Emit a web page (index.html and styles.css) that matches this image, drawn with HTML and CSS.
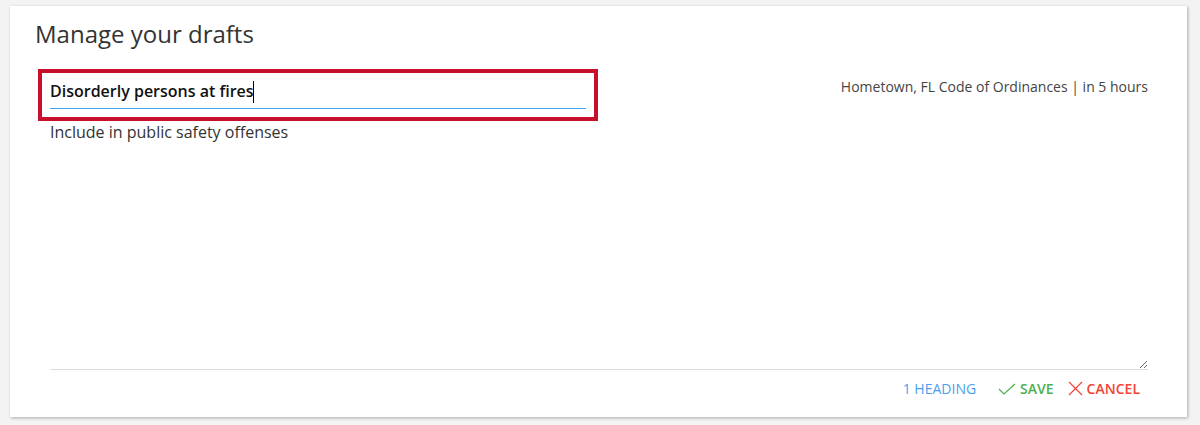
FILE: index.html
```html
<!DOCTYPE html>
<html lang="en">
<head>
  <meta charset="UTF-8">
  <title>Manage your drafts</title>
  <link rel="stylesheet" href="styles.css">
</head>
<body>
  <div class="card">
    <h1>Manage your drafts</h1>
    <div class="draft">
      <div class="draft-top">
        <div class="title-box">
          <input type="text" class="title-input" value="Disorderly persons at fires">
          <span class="caret"></span>
        </div>
        <div class="meta">Hometown, FL Code of Ordinances | in 5 hours</div>
      </div>
      <textarea class="desc">Include in public safety offenses</textarea>
      <div class="actions">
        <button class="btn heading">1 Heading</button>
        <button class="btn save">
          <svg width="18" height="12" viewBox="0 0 18 12"><path d="M1 6 L6 11 L17 1" fill="none" stroke="#4caf50" stroke-width="1.2"/></svg>
          Save
        </button>
        <button class="btn cancel">
          <svg width="15" height="15" viewBox="0 0 15 15"><path d="M1 1 L14 14 M14 1 L1 14" fill="none" stroke="#f44336" stroke-width="1.2"/></svg>
          Cancel
        </button>
      </div>
    </div>
  </div>
</body>
</html>
```

FILE: styles.css
```css
* {
  margin: 0;
  padding: 0;
  box-sizing: border-box;
  font-family: "Open Sans", Arial, sans-serif;
}

body {
  background: #f3f3f3;
  padding: 6px 13px 8px 10px;
}

.card {
  background: #fff;
  height: 411px;
  box-shadow: 1px 1px 3px rgba(0, 0, 0, 0.3);
  padding: 12px 39px 0 25px;
}

h1 {
  font-size: 24px;
  font-weight: 400;
  line-height: 32px;
  color: #333;
}

.draft {
  margin: 19px 0 0 15px;
}

.draft-top {
  display: flex;
  justify-content: space-between;
  align-items: flex-start;
}

.title-box {
  position: relative;
  width: 560px;
  margin-left: -12px;
  border: 4px solid #c8102e;
  padding: 0 8px 8px;
}

.title-input {
  display: block;
  width: 100%;
  height: 36px;
  border: none;
  border-bottom: 1px solid #42a5f5;
  outline: none;
  font-size: 16px;
  font-weight: 600;
  color: #111;
  background: transparent;
}

.caret {
  position: absolute;
  left: 211px;
  top: 8px;
  width: 1px;
  height: 22px;
  background: #000;
}

.meta {
  font-size: 14px;
  line-height: 20px;
  color: #444;
  margin-top: 8px;
}

.desc {
  display: block;
  width: 100%;
  height: 249px;
  border: none;
  border-bottom: 1px solid #ddd;
  outline: none;
  resize: vertical;
  font-size: 16px;
  line-height: 22px;
  color: #333;
}

.actions {
  display: flex;
  justify-content: flex-end;
  align-items: center;
  gap: 22px;
  padding: 9px 8px 0 0;
}

.btn {
  display: flex;
  align-items: center;
  gap: 4px;
  border: none;
  background: none;
  font-size: 14px;
  text-transform: uppercase;
  cursor: pointer;
}

.heading {
  color: #4a9ff0;
}

.save {
  color: #4caf50;
  font-weight: 600;
}

.cancel {
  color: #f44336;
  font-weight: 600;
  margin-left: -8px;
}
```
